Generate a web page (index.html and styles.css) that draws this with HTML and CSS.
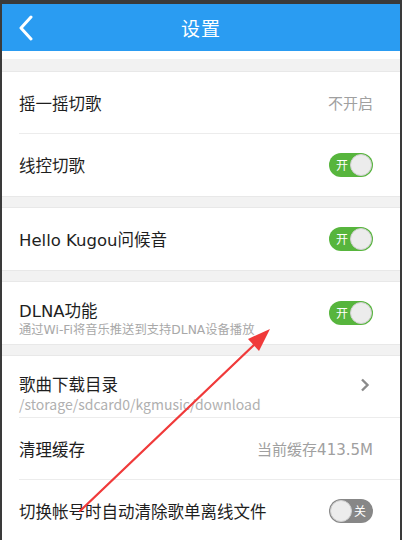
FILE: index.html
```html
<!DOCTYPE html>
<html>
<head>
<meta charset="utf-8">
<link rel="stylesheet" href="styles.css">
</head>
<body>
<div class="frame">
  <div class="app">
    <div class="topbar">
      <svg class="back" width="16" height="26" viewBox="0 0 16 26"><path d="M13 2 L3 13 L13 24" fill="none" stroke="#fff" stroke-width="3" stroke-linecap="round" stroke-linejoin="round"/></svg>
      <div class="title">设置</div>
    </div>
    <div class="whitestrip"></div>
    <div class="gap first"></div>
    <div class="group">
      <div class="row">
        <div class="label">摇一摇切歌</div>
        <div class="value">不开启</div>
      </div>
      <div class="row">
        <div class="label">线控切歌</div>
        <div class="switch on"><span class="txt">开</span><span class="knob"></span></div>
      </div>
    </div>
    <div class="gap"></div>
    <div class="group">
      <div class="row">
        <div class="label">Hello Kugou问候音</div>
        <div class="switch on"><span class="txt">开</span><span class="knob"></span></div>
      </div>
    </div>
    <div class="gap"></div>
    <div class="group">
      <div class="row two">
        <div class="texts">
          <div class="label">DLNA功能</div>
          <div class="sub">通过Wi-Fi将音乐推送到支持DLNA设备播放</div>
        </div>
        <div class="switch on"><span class="txt">开</span><span class="knob"></span></div>
      </div>
    </div>
    <div class="gap"></div>
    <div class="group">
      <div class="row two">
        <div class="texts">
          <div class="label">歌曲下载目录</div>
          <div class="sub path">/storage/sdcard0/kgmusic/download</div>
        </div>
        <svg class="chev" width="10" height="14" viewBox="0 0 10 14"><path d="M2 1.5 L7.5 7 L2 12.5" fill="none" stroke="#8a8a8a" stroke-width="2.4"/></svg>
      </div>
      <div class="row">
        <div class="label">清理缓存</div>
        <div class="value">当前缓存413.5M</div>
      </div>
      <div class="row">
        <div class="label">切换帐号时自动清除歌单离线文件</div>
        <div class="switch off"><span class="knob"></span><span class="txt">关</span></div>
      </div>
    </div>
    <svg class="arrow" width="402" height="540" viewBox="0 0 402 540">
      <line x1="80" y1="511" x2="257" y2="342" stroke="#f03a3a" stroke-width="2.2" stroke-linecap="round"/>
      <polygon points="270,329 248,339 259,351" fill="#f03a3a"/>
    </svg>
  </div>
</div>
</body>
</html>
```
FILE: styles.css
```css
html, body {
  margin: 0;
  padding: 0;
  background: #3a3a3a;
}
.frame {
  width: 402px;
  height: 540px;
  padding: 4px 2px 0 2px;
  box-sizing: border-box;
  overflow: hidden;
}
.app {
  position: relative;
  background: #f2f2f2;
  height: 536px;
  font-family: "DejaVu Sans", "Noto Sans CJK SC", sans-serif;
  color: #222;
}
.topbar {
  height: 47px;
  background: #2a9cf2;
  display: flex;
  align-items: center;
  justify-content: center;
  position: relative;
}
.back {
  position: absolute;
  left: 16px;
  top: 11px;
}
.title {
  color: #fff;
  font-family: "Noto Sans CJK SC", sans-serif;
  font-size: 19px;
  letter-spacing: 1px;
}
.whitestrip {
  height: 8px;
  background: #fff;
}
.gap {
  height: 12px;
  border-top: 1px solid #e8e8e8;
  border-bottom: 1px solid #e8e8e8;
  box-sizing: border-box;
  background: #f2f2f2;
}
.gap.first {
  height: 13px;
  border-top: none;
}
.group {
  background: #fff;
  padding-left: 17px;
}
.row {
  height: 62px;
  display: flex;
  align-items: center;
  justify-content: space-between;
  padding-right: 27px;
  border-bottom: 1px solid #ececec;
  box-sizing: border-box;
}
.group .row:last-child {
  border-bottom: none;
}
.label {
  font-size: 16.5px;
  color: #1e1e1e;
}
.value {
  font-size: 15px;
  color: #a0a0a0;
}
.row.two .texts {
  align-self: stretch;
  display: flex;
  flex-direction: column;
  padding-top: 20px;
  box-sizing: border-box;
}
.row.two .label {
  line-height: 20px;
}
.sub {
  font-size: 12.3px;
  color: #a8a8a8;
  line-height: 16px;
}
.sub.path {
  font-family: "Noto Sans CJK SC", sans-serif;
  font-size: 14px;
  line-height: 17px;
  color: #b0b0b0;
}
.chev {
  margin-right: 3px;
  margin-top: -4px;
}
.switch {
  width: 44px;
  height: 24px;
  border-radius: 12px;
  display: flex;
  align-items: center;
  box-sizing: border-box;
  padding: 1px;
  font-family: "Noto Sans CJK SC", sans-serif;
}
.switch.on {
  background: #57b53d;
  justify-content: space-between;
}
.switch.off {
  background: #878787;
  justify-content: space-between;
}
.switch .knob {
  width: 22px;
  height: 22px;
  border-radius: 50%;
  background: #ececec;
  box-sizing: border-box;
  border: 1px solid #cfcfcf;
}
.switch .txt {
  color: #fff;
  font-size: 12px;
  line-height: 22px;
}
.switch.on .txt {
  margin-left: 6px;
}
.switch.off .txt {
  margin-right: 6px;
}
.arrow {
  position: absolute;
  left: -2px;
  top: -4px;
  pointer-events: none;
}
```
